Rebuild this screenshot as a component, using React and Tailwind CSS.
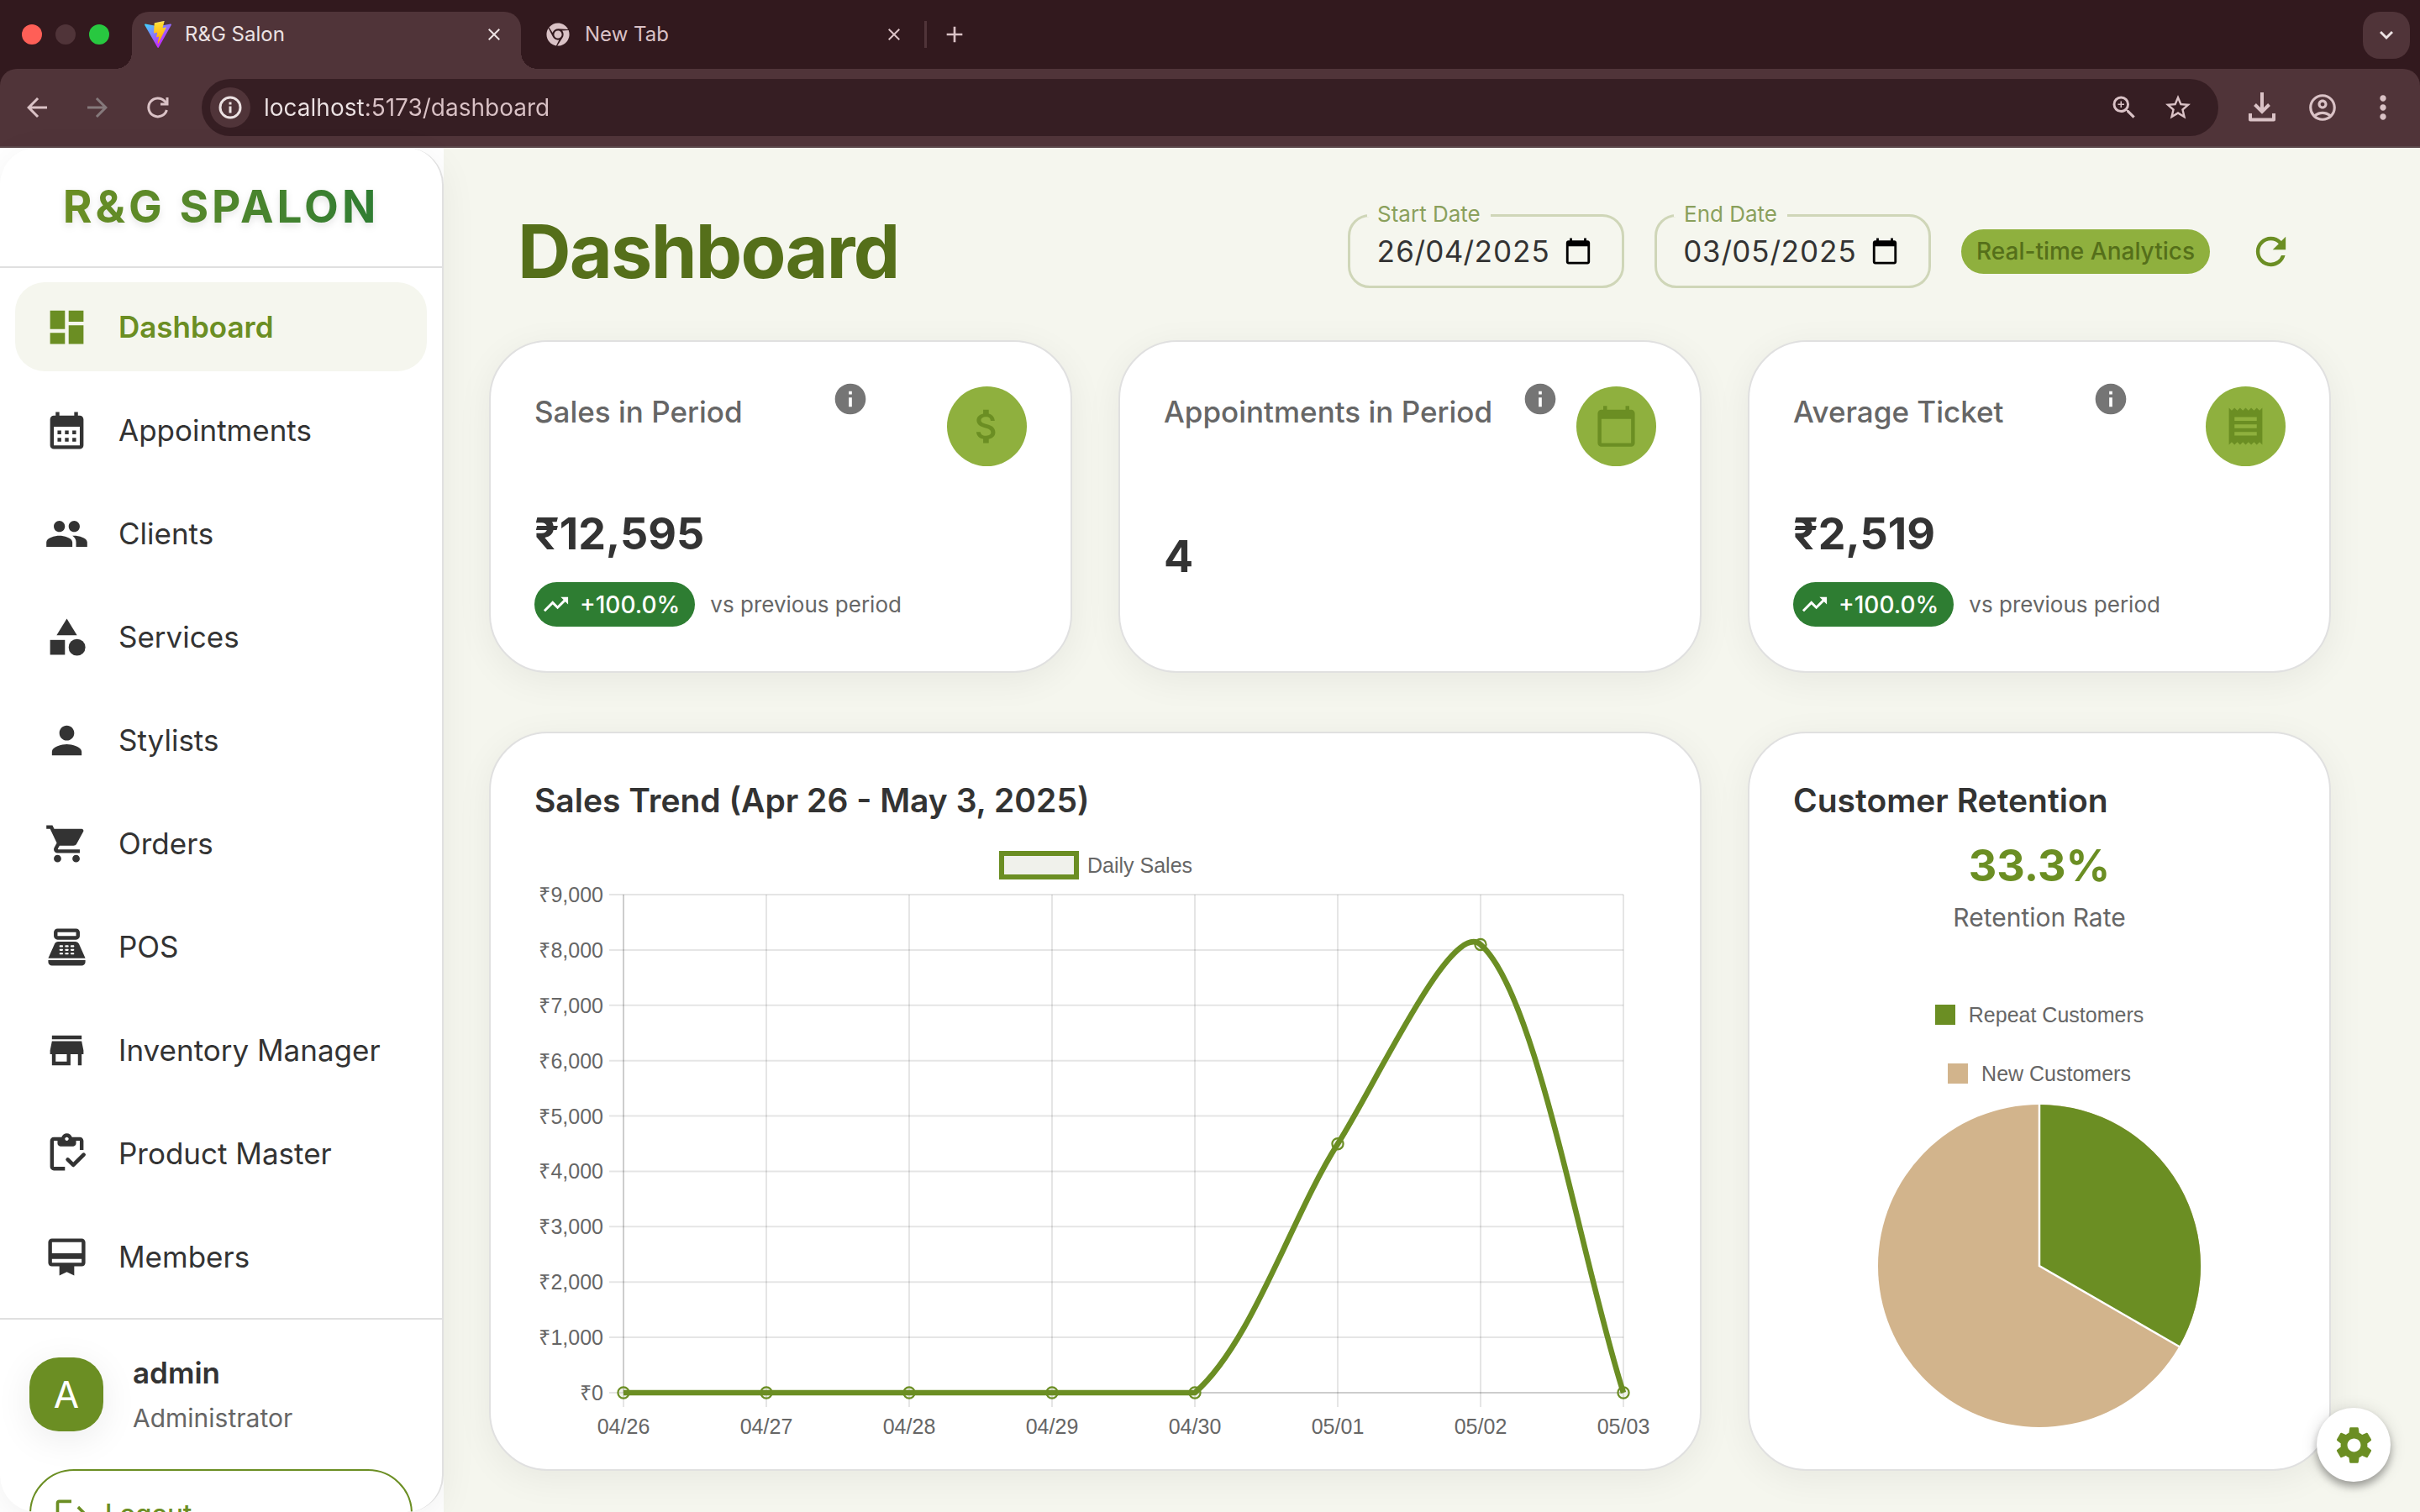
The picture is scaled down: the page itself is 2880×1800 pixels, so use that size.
import React from "react";
import {
  MdDashboard,
  MdCalendarMonth,
  MdPeople,
  MdCategory,
  MdPerson,
  MdShoppingCart,
  MdPointOfSale,
  MdStore,
  MdCardMembership,
  MdLogout,
  MdInfo,
  MdAttachMoney,
  MdCalendarToday,
  MdReceipt,
  MdTrendingUp,
  MdRefresh,
  MdSettings,
  MdArrowBack,
  MdArrowForward,
  MdZoomIn,
  MdStarBorder,
  MdOutlineAccountCircle,
  MdMoreVert,
  MdClose,
  MdAdd,
} from "react-icons/md";
import { FaChrome } from "react-icons/fa";

function ViteLogo() {
  return (
    <svg viewBox="0 0 256 257" className="size-8 shrink-0" aria-hidden="true">
      <defs>
        <linearGradient id="viteBody" x1="-.8%" x2="57.6%" y1="7.7%" y2="78.4%">
          <stop offset="0%" stopColor="#41D1FF" />
          <stop offset="100%" stopColor="#BD34FE" />
        </linearGradient>
        <linearGradient id="viteBolt" x1="43.4%" x2="50.3%" y1="2.2%" y2="89%">
          <stop offset="0%" stopColor="#FFEA83" />
          <stop offset="8.3%" stopColor="#FFDD35" />
          <stop offset="100%" stopColor="#FFA800" />
        </linearGradient>
      </defs>
      <path
        fill="url(#viteBody)"
        d="M255.153 37.938L134.897 252.976c-2.483 4.44-8.862 4.466-11.382.048L.875 37.958c-2.746-4.814 1.371-10.646 6.827-9.67l120.385 21.517a6.537 6.537 0 0 0 2.322-.004l117.867-21.483c5.438-.991 9.574 4.796 6.877 9.62Z"
      />
      <path
        fill="url(#viteBolt)"
        d="M185.432.063L96.44 17.501a3.268 3.268 0 0 0-2.634 3.014l-5.474 92.456a3.268 3.268 0 0 0 3.997 3.378l24.777-5.718c2.318-.535 4.413 1.507 3.936 3.838l-7.361 36.047c-.495 2.426 1.782 4.5 4.151 3.78l15.304-4.649c2.372-.72 4.652 1.36 4.15 3.788l-11.698 56.621c-.732 3.542 3.979 5.473 5.943 2.437l1.313-2.028l72.516-144.72c1.215-2.423-.88-5.186-3.54-4.672l-25.505 4.922c-2.396.462-4.435-1.77-3.759-4.114l16.646-57.705c.677-2.35-1.37-4.583-3.769-4.113Z"
      />
    </svg>
  );
}

function ClipboardCheck({ className }) {
  return (
    <svg viewBox="0 0 24 24" className={className} fill="currentColor" aria-hidden="true">
      <path d="M5 5h2v1.500C7 7.330 7.670 8 8.500 8h7c.83 0 1.500-.67 1.500-1.500V5h2v5h2V5c0-1.100-.9-2-2-2h-4.180C14.400 1.840 13.300 1 12 1s-2.400.84-2.820 2H5c-1.100 0-2 .9-2 2v14c0 1.100.9 2 2 2h6v-2H5V5zm7-2c.55 0 1 .45 1 1s-.45 1-1 1-1-.45-1-1 .45-1 1-1z" />
      <path
        d="M12.500 15.100l3 3 5.600-5.600"
        fill="none"
        stroke="currentColor"
        strokeWidth="2.100"
        strokeLinecap="round"
        strokeLinejoin="round"
      />
    </svg>
  );
}

function TabStrip() {
  return (
    <div className="flex h-[82px] items-end bg-[#32191e] pl-[26px] pr-3">
      <div className="flex h-[68px] gap-4 pb-[14px] items-center">
        <span className="size-6 rounded-full bg-[#ff5f57]" />
        <span className="size-6 rounded-full bg-[#503439]" />
        <span className="size-6 rounded-full bg-[#28c840]" />
      </div>
      <div className="relative ml-[27px] flex h-[68px] w-[463px] items-center gap-4 rounded-t-[20px] bg-[#503439] pb-[14px] pl-[15px] pr-5">
        <span className="absolute -left-5 bottom-0 size-5 bg-[radial-gradient(circle_at_0_0,#32191e_20px,#503439_20px)]" />
        <span className="absolute -right-5 bottom-0 size-5 bg-[radial-gradient(circle_at_100%_0,#32191e_20px,#503439_20px)]" />
        <ViteLogo />
        <span className="flex-1 text-[24px] leading-8 text-[#ece2e3]">R&amp;G Salon</span>
        <button aria-label="Close R&G Salon tab" className="text-[#ece2e3]">
          <MdClose className="size-6" />
        </button>
      </div>
      <div className="flex h-[68px] w-[480px] items-center gap-[18px] pb-[14px] pl-[30px] pr-[24px] text-[#dac2c6]">
        <FaChrome className="size-7" />
        <span className="flex-1 text-[24px] leading-8">New Tab</span>
        <button aria-label="Close new tab">
          <MdClose className="size-6" />
        </button>
      </div>
      <div className="flex h-[68px] flex-1 items-center pb-[14px]">
        <span className="h-8 w-[3px] bg-[#503439]" />
        <button aria-label="Open a tab" className="ml-[17px] text-[#dac2c6]">
          <MdAdd className="size-8" />
        </button>
      </div>
      <button
        aria-label="Search tabs"
        className="mb-3 flex size-14 items-center justify-center rounded-[20px] bg-[#503439] text-[#ece2e3]"
      >
        <svg viewBox="0 0 16 12" className="h-3 w-4" fill="none" stroke="currentColor" strokeWidth="3">
          <path d="M1 2l7 7 7-7" />
        </svg>
      </button>
    </div>
  );
}

function Toolbar() {
  const round = "flex size-12 items-center justify-center";
  return (
    <div className="bg-[#32191e]">
      <div className="flex h-[94px] items-center rounded-t-[20px] border-b-2 border-[#5b474a] bg-[#503439] px-5 text-[#dac2c6]">
        <div className="flex gap-6">
          <button aria-label="Back" className={round}>
            <MdArrowBack className="size-9" />
          </button>
          <button aria-label="Forward" className={round}>
            <MdArrowForward className="size-9 text-[#85797b]" />
          </button>
          <button aria-label="Reload" className={round}>
            <svg viewBox="0 0 28 28" className="size-7" fill="none" stroke="currentColor" strokeWidth="3">
              <path d="M24.4 17A11 11 0 1 1 22 6.500L25 9.500" />
              <path d="M25 2v8h-8" />
            </svg>
          </button>
        </div>
        <div className="ml-7 flex h-[68px] flex-1 items-center rounded-full bg-[#361e23] pl-[10px] pr-7">
          <button
            aria-label="Site information"
            className="flex size-12 items-center justify-center rounded-full bg-[#503439] text-[#ece2e3]"
          >
            <svg viewBox="0 0 28 28" className="size-7" fill="none" stroke="currentColor" strokeWidth="3">
              <circle cx="14" cy="14" r="12" />
              <path d="M14 12.500v8M14 7.500v3" />
            </svg>
          </button>
          <input
            aria-label="Address"
            defaultValue="localhost:5173/dashboard"
            className="ml-4 min-w-0 flex-1 bg-[linear-gradient(90deg,#ece2e3_122px,#dac2c6_122px)] bg-clip-text text-[28px] leading-10 text-transparent outline-none"
          />
          <div className="flex gap-6">
            <button aria-label="Zoom" className="flex size-10 items-center justify-center">
              <MdZoomIn className="size-9" />
            </button>
            <button aria-label="Bookmark this page" className="flex size-10 items-center justify-center">
              <MdStarBorder className="size-9" />
            </button>
          </div>
        </div>
        <div className="ml-7 flex gap-6">
          <button aria-label="Downloads" className={round}>
            <svg viewBox="0 0 36 36" className="size-9" fill="none" stroke="currentColor" strokeWidth="4">
              <path d="M18 0v22" />
              <path d="M9.500 14.500l8.500 8.500 8.500-8.500" />
              <path d="M4 25v7.500h28V25" strokeLinejoin="round" />
            </svg>
          </button>
          <button aria-label="Profile" className={round}>
            <MdOutlineAccountCircle className="size-[38px]" />
          </button>
          <button aria-label="Browser menu" className={round}>
            <MdMoreVert className="size-[44px]" />
          </button>
        </div>
      </div>
    </div>
  );
}

const navItems = [
  { label: "Dashboard", Icon: MdDashboard, active: true },
  { label: "Appointments", Icon: MdCalendarMonth },
  { label: "Clients", Icon: MdPeople },
  { label: "Services", Icon: MdCategory },
  { label: "Stylists", Icon: MdPerson },
  { label: "Orders", Icon: MdShoppingCart },
  { label: "POS", Icon: MdPointOfSale },
  { label: "Inventory Manager", Icon: MdStore },
  { label: "Product Master", Icon: ClipboardCheck },
  { label: "Members", Icon: MdCardMembership },
];

function Sidebar() {
  return (
    <div className="relative z-10 w-[528px] shrink-0 bg-white">
      <aside className="flex h-full flex-col overflow-hidden rounded-[44px] border-r-2 border-[#e0e0e0] bg-white shadow-[0_9px_44px_rgba(0,0,0,0.06)]">
        <div className="flex h-[143px] shrink-0 items-center justify-center border-b-2 border-[#e0e0e0] pb-[2px]">
          <span className="bg-gradient-to-r from-[#6b8e23] to-[#2e7d32] bg-clip-text text-[53px] leading-[64px] font-bold tracking-[4px] text-transparent drop-shadow-[0_4px_4px_rgba(0,0,0,0.1)]">
            R&amp;G SPALON
          </span>
        </div>
        <nav className="flex shrink-0 flex-col gap-[17px] px-[18px] pt-[17px] pb-5">
          {navItems.map(({ label, Icon, active }) => (
            <a
              key={label}
              href="#"
              className={
                active
                  ? "flex h-[106px] items-center gap-[35px] rounded-[35px] bg-[#f5f6ee] pl-[35px] text-[35px] font-semibold text-[#6b8e23]"
                  : "flex h-[106px] items-center gap-[35px] rounded-[35px] pl-[35px] text-[35px] text-[#333333]"
              }
            >
              <Icon className="size-[53px]" />
              {label}
            </a>
          ))}
        </nav>
        <div className="shrink-0 border-t-2 border-[#e0e0e0] px-[35px] pt-[35px]">
          <div className="flex items-center gap-[35px]">
            <span className="flex size-[88px] items-center justify-center rounded-[35px] bg-[#6b8e23] text-[44px] text-white shadow-[0_9px_44px_rgba(0,0,0,0.08)]">
              A
            </span>
            <div>
              <div className="text-[35px] leading-[56px] font-semibold text-[#333333]">admin</div>
              <div className="text-[30px] leading-[52px] text-[#666666]">Administrator</div>
            </div>
          </div>
          <button className="mt-[35px] flex h-[106px] w-full items-center gap-[18px] rounded-full border-2 border-[#6b8e23] pl-[26px] text-[31px] font-medium text-[#6b8e23]">
            <MdLogout className="size-[44px]" />
            Logout
          </button>
        </div>
      </aside>
    </div>
  );
}

function DateField({ id, label, value }) {
  return (
    <fieldset className="flex h-[88px] w-[329px] min-w-0 shrink-0 items-center rounded-[26px] border-[3px] border-[#cfd6b8] pr-[35px] pl-[31px]">
      <legend className="-ml-[11px] flex h-[3px] items-center px-3">
        <label htmlFor={id} className="pb-1 text-[26px] leading-8 text-[#8aa05c]">
          {label}
        </label>
      </legend>
      <input
        id={id}
        defaultValue={value}
        className="h-14 min-w-0 flex-1 bg-transparent text-[35px] text-[#333333] outline-none tabular-nums"
      />
      <button aria-label={"Choose " + label.toLowerCase()} className="text-black">
        <MdCalendarToday className="size-[34px]" />
      </button>
    </fieldset>
  );
}

function Card({ className, children }) {
  return (
    <section
      className={
        "rounded-[70px] border-2 border-[#e0e0e0] bg-white px-[52px] pt-[53px] shadow-[0_9px_44px_rgba(0,0,0,0.06)] " +
        className
      }
    >
      {children}
    </section>
  );
}

function StatCard({ title, value, change, Icon }) {
  return (
    <Card className="flex flex-col pb-[53px]">
      <div className="flex items-start justify-between">
        <h2 className="mr-[14px] text-[35px] leading-[60px] font-medium text-[#666666]">{title}</h2>
        <button aria-label={"About " + title} className="-mt-[7px] text-[#757575]">
          <MdInfo className="size-[44px]" />
        </button>
        <span className="flex size-[95px] items-center justify-center rounded-full bg-[#8fb03e] text-[#6b8e23]">
          <Icon className="size-[53px]" />
        </span>
      </div>
      <div className="mt-[49px] flex flex-1 flex-col justify-center">
        <div className="mb-[25px] text-[52px] leading-[64px] font-bold text-[#333333]">{value}</div>
        {change && (
          <div className="flex items-center gap-[18px]">
            <span className="flex h-[53px] items-center gap-[11px] rounded-full bg-[#2e7d32] pr-[18px] pl-2 text-[28px] font-medium text-white">
              <MdTrendingUp className="size-[35px]" />
              {change}
            </span>
            <span className="text-[26px] text-[#666666]">vs previous period</span>
          </div>
        )}
      </div>
    </Card>
  );
}

const salesDays = ["04/26", "04/27", "04/28", "04/29", "04/30", "05/01", "05/02", "05/03"];
const salesValues = [0, 0, 0, 0, 0, 4497, 8098, 0];
const plot = { left: 106, right: 1296, top: 65, bottom: 658 };

function pointAt(i) {
  return {
    x: plot.left + (i * (plot.right - plot.left)) / (salesDays.length - 1),
    y: plot.bottom - (salesValues[i] / 9000) * (plot.bottom - plot.top),
  };
}

// Smooths the series with neighbour-weighted control points kept inside the plot area.
function smoothPath(points, tension) {
  const clamp = (v) => Math.min(plot.bottom, Math.max(plot.top, v));
  const controls = points.map((cur, i) => {
    const prev = points[i - 1] || cur;
    const next = points[i + 1] || cur;
    const before = Math.hypot(cur.x - prev.x, cur.y - prev.y);
    const after = Math.hypot(next.x - cur.x, next.y - cur.y);
    const a = (tension * before) / (before + after);
    const b = (tension * after) / (before + after);
    return {
      inX: cur.x - a * (next.x - prev.x),
      inY: clamp(cur.y - a * (next.y - prev.y)),
      outX: cur.x + b * (next.x - prev.x),
      outY: clamp(cur.y + b * (next.y - prev.y)),
    };
  });
  return points.reduce((d, p, i) => {
    if (i === 0) return `M${p.x} ${p.y}`;
    const c0 = controls[i - 1];
    const c1 = controls[i];
    return `${d}C${c0.outX} ${c0.outY} ${c1.inX} ${c1.inY} ${p.x} ${p.y}`;
  }, "");
}

function SalesChart() {
  const points = salesDays.map((_, i) => pointAt(i));
  const rows = [0, 1, 2, 3, 4, 5, 6, 7, 8, 9];
  return (
    <svg
      viewBox="0 0 1335 715"
      className="mt-[21px] w-full font-['Liberation_Sans',Arial,sans-serif] text-[25px]"
      role="img"
      aria-label="Daily sales line chart"
    >
      <rect x="556" y="16" width="89" height="28" fill="#f0f1eb" stroke="#6b8e23" strokeWidth="6" />
      <text x="658" y="39" fill="#666666">
        Daily Sales
      </text>
      <g stroke="#000000" strokeOpacity="0.1" strokeWidth="2">
        {rows.map((n) => {
          const y = plot.bottom - (n * (plot.bottom - plot.top)) / 9;
          return <path key={n} d={`M${plot.left - 17} ${y}H${plot.right}`} />;
        })}
        {points.map((p) => (
          <path key={p.x} d={`M${p.x} ${plot.top}V${plot.bottom + 17}`} />
        ))}
        <path d={`M${plot.left} ${plot.top}V${plot.bottom}`} />
        <path d={`M${plot.left} ${plot.bottom}H${plot.right}`} />
      </g>
      <g fill="#666666" textAnchor="end">
        {rows.map((n) => (
          <text key={n} x="82" y={plot.bottom - (n * (plot.bottom - plot.top)) / 9 + 9}>
            {n === 0 ? "₹0" : `₹${n},000`}
          </text>
        ))}
      </g>
      <g fill="#666666" textAnchor="middle">
        {points.map((p, i) => (
          <text key={salesDays[i]} x={p.x} y="707">
            {salesDays[i]}
          </text>
        ))}
      </g>
      <path d={smoothPath(points, 0.3)} fill="none" stroke="#6b8e23" strokeWidth="6.6" strokeLinejoin="round" />
      <g fill="#6b8e23" fillOpacity="0.1" stroke="#6b8e23" strokeWidth="2.2">
        {points.map((p) => (
          <circle key={p.x} cx={p.x} cy={p.y} r="6.6" />
        ))}
      </g>
    </svg>
  );
}

function RetentionCard() {
  return (
    <Card className="flex flex-col pb-[49px]">
      <h2 className="text-[39px] leading-[53px] font-semibold text-[#333333]">Customer Retention</h2>
      <div className="mt-5 text-center text-[52px] leading-[64px] font-bold text-[#6b8e23]">33.3%</div>
      <div className="text-center text-[30px] leading-[58px] text-[#666666]">Retention Rate</div>
      <ul className="mt-[71px] flex flex-col items-center gap-[38px] font-['Liberation_Sans',Arial,sans-serif] text-[25px] leading-8 text-[#666666]">
        <li className="flex items-center gap-4">
          <span className="size-6 bg-[#6b8e23]" />
          Repeat Customers
        </li>
        <li className="flex items-center gap-4">
          <span className="size-6 bg-[#d2b48c]" />
          New Customers
        </li>
      </ul>
      <svg viewBox="-193 -193 386 386" className="mx-auto mt-5 w-[386px]" role="img" aria-label="Retention pie chart">
        <circle r="192" fill="#d2b48c" />
        <path d="M0 0V-192A192 192 0 0 1 166.300 96Z" fill="#6b8e23" />
        <path d="M0 -193V0L167.200 96.500" fill="none" stroke="#ffffff" strokeWidth="2.500" />
      </svg>
    </Card>
  );
}

export default function App() {
  return (
    <div className="flex h-screen flex-col overflow-hidden bg-[#f5f6ee] font-['Inter',sans-serif]">
      <header className="shrink-0">
        <TabStrip />
        <Toolbar />
      </header>
      <div className="flex min-h-0 flex-1">
        <Sidebar />
        <main className="min-w-0 flex-1 overflow-hidden pr-[106px] pl-[54px] pt-[70px]">
          <div className="mb-[53px] flex h-[106px] items-center justify-between pr-9 pl-[34px]">
            <h1 className="text-[88px] leading-[106px] font-bold tracking-[-0.02em] text-[#556f1a]">Dashboard</h1>
            <div className="flex items-center gap-9">
              <DateField id="start-date" label="Start Date" value="26/04/2025" />
              <DateField id="end-date" label="End Date" value="03/05/2025" />
              <span className="flex h-[53px] items-center rounded-full bg-[#8fb03e] px-[18px] text-[28px] font-medium whitespace-nowrap text-[#556f1a]">
                Real-time Analytics
              </span>
              <button aria-label="Refresh" className="flex size-[72px] items-center justify-center text-[#6b8e23]">
                <MdRefresh className="size-[53px]" />
              </button>
            </div>
          </div>
          <div className="grid grid-cols-3 gap-x-[55px] gap-y-[70px]">
            <StatCard title="Sales in Period" value="₹12,595" change="+100.0%" Icon={MdAttachMoney} />
            <StatCard title="Appointments in Period" value="4" Icon={MdCalendarToday} />
            <StatCard title="Average Ticket" value="₹2,519" change="+100.0%" Icon={MdReceipt} />
            <Card className="col-span-2 pb-[33px]">
              <h2 className="text-[39px] leading-[53px] font-semibold text-[#333333]">
                Sales Trend (Apr 26 - May 3, 2025)
              </h2>
              <SalesChart />
            </Card>
            <RetentionCard />
          </div>
        </main>
      </div>
      <button
        aria-label="Settings"
        className="fixed right-[35px] bottom-9 z-20 flex size-[88px] items-center justify-center rounded-full bg-white text-[#6b8e23] shadow-[0_6px_10px_rgba(0,0,0,0.3),0_2px_20px_rgba(0,0,0,0.14)]"
      >
        <MdSettings className="size-[53px]" />
      </button>
    </div>
  );
}
